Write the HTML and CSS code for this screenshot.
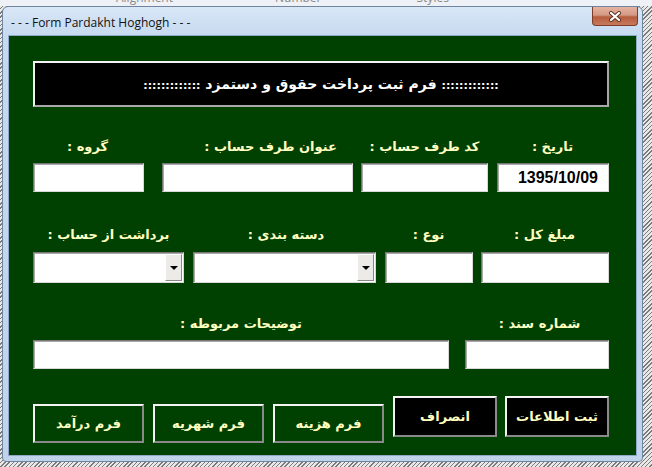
FILE: index.html
```html
<!DOCTYPE html>
<html lang="fa">
<head>
    <meta charset="UTF-8">
    <meta name="viewport" content="width=device-width, initial-scale=1.0">
    <title>Form Pardakht Hoghogh</title>
    <link rel="stylesheet" href="styles.css">
</head>
<body>
    <div class="ribbon">
        <div class="ribbon-labels">
            <span class="rb-align">Alignment</span>
            <span class="rb-number">Number</span>
            <span class="rb-styles">Styles</span>
        </div>
    </div>

    <div class="window">
        <div class="titlebar">
            <span class="title">- - - Form Pardakht Hoghogh - - -</span>
            <div class="close-btn">
                <svg width="14" height="11" viewBox="0 0 14 11">
                    <path d="M3 2 L11 9 M11 2 L3 9" stroke="#5a3020" stroke-width="4" stroke-linecap="round"/>
                    <path d="M3 2 L11 9 M11 2 L3 9" stroke="#ffffff" stroke-width="2.2" stroke-linecap="round"/>
                </svg>
            </div>
        </div>

        <div class="client">
            <div class="header"><span class="dots">:::::::::::::</span> فرم ثبت پرداخت حقوق و دستمزد <span class="dots">:::::::::::::</span></div>

            <!-- row 1 -->
            <div class="labels row1-labels">
                <span class="lbl l-group">گروه :</span>
                <span class="lbl l-title">عنوان طرف حساب :</span>
                <span class="lbl l-code">کد طرف حساب :</span>
                <span class="lbl l-date">تاریخ :</span>
            </div>
            <div class="fields row1-fields">
                <div class="box f-group"></div>
                <div class="box f-title"></div>
                <div class="box f-code"></div>
                <div class="box f-date">1395/10/09</div>
            </div>

            <!-- row 2 -->
            <div class="labels row2-labels">
                <span class="lbl l-account">برداشت از حساب :</span>
                <span class="lbl l-category">دسته بندی :</span>
                <span class="lbl l-type">نوع :</span>
                <span class="lbl l-amount">مبلغ کل :</span>
            </div>
            <div class="fields row2-fields">
                <div class="box combo f-account"><div class="drop"><span class="arrow"></span></div></div>
                <div class="box combo f-category"><div class="drop"><span class="arrow"></span></div></div>
                <div class="box f-type"></div>
                <div class="box f-amount"></div>
            </div>

            <!-- row 3 -->
            <div class="labels row3-labels">
                <span class="lbl l-desc">توضیحات مربوطه :</span>
                <span class="lbl l-doc">شماره سند :</span>
            </div>
            <div class="fields row3-fields">
                <div class="box f-desc"></div>
                <div class="box f-doc"></div>
            </div>

            <!-- buttons -->
            <div class="buttons">
                <div class="btn green b-income">فرم درآمد</div>
                <div class="btn green b-tuition">فرم شهریه</div>
                <div class="btn green b-cost">فرم هزینه</div>
                <div class="btn black b-cancel">انصراف</div>
                <div class="btn black b-save">ثبت اطلاعات</div>
            </div>
        </div>
    </div>
</body>
</html>
```

FILE: styles.css
```css
body{
    margin: 0;
    width: 652px;
    height: 467px;
    overflow: hidden;
    background: repeating-linear-gradient(135deg, #7a7a7a 0 1px, #e8e8e8 1px 3px);
}
.ribbon{
    height: 6px;
    overflow: hidden;
    background-color: #eef1f5;
}
.ribbon-labels{
    display: flex;
    margin-top: -9px;
    font-family: "Open Sans", sans-serif;
    font-size: 12px;
    line-height: 14px;
    color: #8a8a8a;
}
.rb-align{ margin-left: 116px; }
.rb-number{ margin-left: 102px; }
.rb-styles{ margin-left: 95px; }

.window{
    width: 641px;
    height: 456px;
    margin-left: 2px;
    box-sizing: border-box;
    border: 1px solid #6f849e;
    border-radius: 6px 6px 4px 4px;
    background: linear-gradient(#d9e7f7, #c6d9ef 30px, #bfd3eb);
    display: flex;
    flex-direction: column;
}
.titlebar{
    height: 28px;
    display: flex;
    align-items: flex-start;
    padding-left: 8px;
}
.title{
    font-family: "Open Sans", sans-serif;
    font-size: 12px;
    color: #111;
    margin-top: 7px;
}
.close-btn{
    margin-left: auto;
    margin-right: 4px;
    width: 46px;
    height: 19px;
    box-sizing: border-box;
    border: 1px solid #7e3c28;
    border-top: none;
    border-radius: 0 0 4px 4px;
    background: linear-gradient(#e4b3a0, #d39a84 45%, #b55d3d 55%, #c77a5c);
    display: flex;
    align-items: center;
    justify-content: center;
}
.client{
    width: 629px;
    height: 421px;
    margin-left: 5px;
    box-sizing: border-box;
    border: 1px solid #8ea8c6;
    background-color: #004000;
    padding-left: 24px;
    font-family: "DejaVu Sans", sans-serif;
}

.header{
    width: 576px;
    height: 46px;
    margin-top: 25px;
    box-sizing: border-box;
    border: 2px solid;
    border-color: #f4f4f4 #a8a8a8 #a8a8a8 #f4f4f4;
    background-color: #000;
    color: #fff;
    font-weight: bold;
    font-size: 14px;
    direction: rtl;
    text-align: center;
    line-height: 42px;
}
.dots{
    font-size: 11px;
    letter-spacing: -1px;
}

.labels{
    display: flex;
    height: 18px;
}
.lbl{
    color: #ffffc0;
    font-weight: bold;
    font-size: 13px;
    line-height: 18px;
    direction: rtl;
    text-align: center;
    white-space: nowrap;
    display: flex;
    justify-content: center;
}
.fields{
    display: flex;
}
.box{
    height: 29px;
    box-sizing: border-box;
    background-color: #fff;
    border: 1px solid;
    border-color: #767676 #d8d8d8 #d8d8d8 #767676;
    box-shadow: inset 1px 1px 0 #a8a8a8;
}

/* row 1 */
.row1-labels{ margin-top: 31px; }
.l-group{ margin-left: 36px; width: 37px; }
.l-title{ margin-left: 85px; width: 159px; }
.l-code{ margin-left: 22px; width: 105px; }
.l-date{ margin-left: 55px; width: 41px; }

.row1-fields{ margin-top: 7px; }
.f-group{ width: 111px; }
.f-title{ margin-left: 18px; width: 191px; }
.f-code{ margin-left: 8px; width: 127px; }
.f-date{
    margin-left: 9px;
    width: 112px;
    font-family: "Liberation Sans", sans-serif;
    font-weight: bold;
    font-size: 16px;
    color: #000;
    text-align: right;
    padding-right: 10px;
    line-height: 27px;
}

/* row 2 */
.row2-labels{ margin-top: 34px; }
.l-account{ margin-left: 14px; width: 123px; }
.l-category{ margin-left: 77px; width: 78px; }
.l-type{ margin-left: 88px; width: 31px; }
.l-amount{ margin-left: 69px; width: 63px; }

.row2-fields{ margin-top: 8px; }
.row2-fields .box{ height: 31px; }
.combo{
    display: flex;
    justify-content: flex-end;
    padding: 1px 1px 1px 0;
}
.drop{
    width: 17px;
    box-sizing: border-box;
    border: 1px solid;
    border-color: #ffffff #888888 #888888 #ffffff;
    background-color: #ecebe8;
    display: flex;
    align-items: center;
    justify-content: center;
}
.arrow{
    width: 0;
    height: 0;
    border-left: 4px solid transparent;
    border-right: 4px solid transparent;
    border-top: 4px solid #000;
}
.f-account{ width: 151px; }
.f-category{ margin-left: 9px; width: 183px; }
.f-type{ margin-left: 9px; width: 88px; }
.f-amount{ margin-left: 8px; width: 128px; }

/* row 3 */
.row3-labels{ margin-top: 32px; }
.l-desc{ margin-left: 148px; width: 120px; }
.l-doc{ margin-left: 198px; width: 81px; }

.row3-fields{ margin-top: 7px; }
.f-desc{ width: 416px; }
.f-doc{ margin-left: 16px; width: 144px; }

/* buttons */
.buttons{
    display: flex;
    align-items: flex-start;
    margin-top: 27px;
}
.btn{
    box-sizing: border-box;
    border: 2px solid;
    border-color: #f4f4f4 #8a8a8a #8a8a8a #f4f4f4;
    color: #ffffc0;
    font-weight: bold;
    font-size: 13px;
    direction: rtl;
    display: flex;
    align-items: center;
    justify-content: center;
}
.green{
    background-color: #004000;
    width: 111px;
    height: 39px;
    margin-top: 8px;
}
.black{
    background-color: #000;
    width: 104px;
    height: 41px;
}
.b-tuition, .b-cost, .b-cancel{ margin-left: 9px; }
.b-save{ margin-left: 8px; }
```
